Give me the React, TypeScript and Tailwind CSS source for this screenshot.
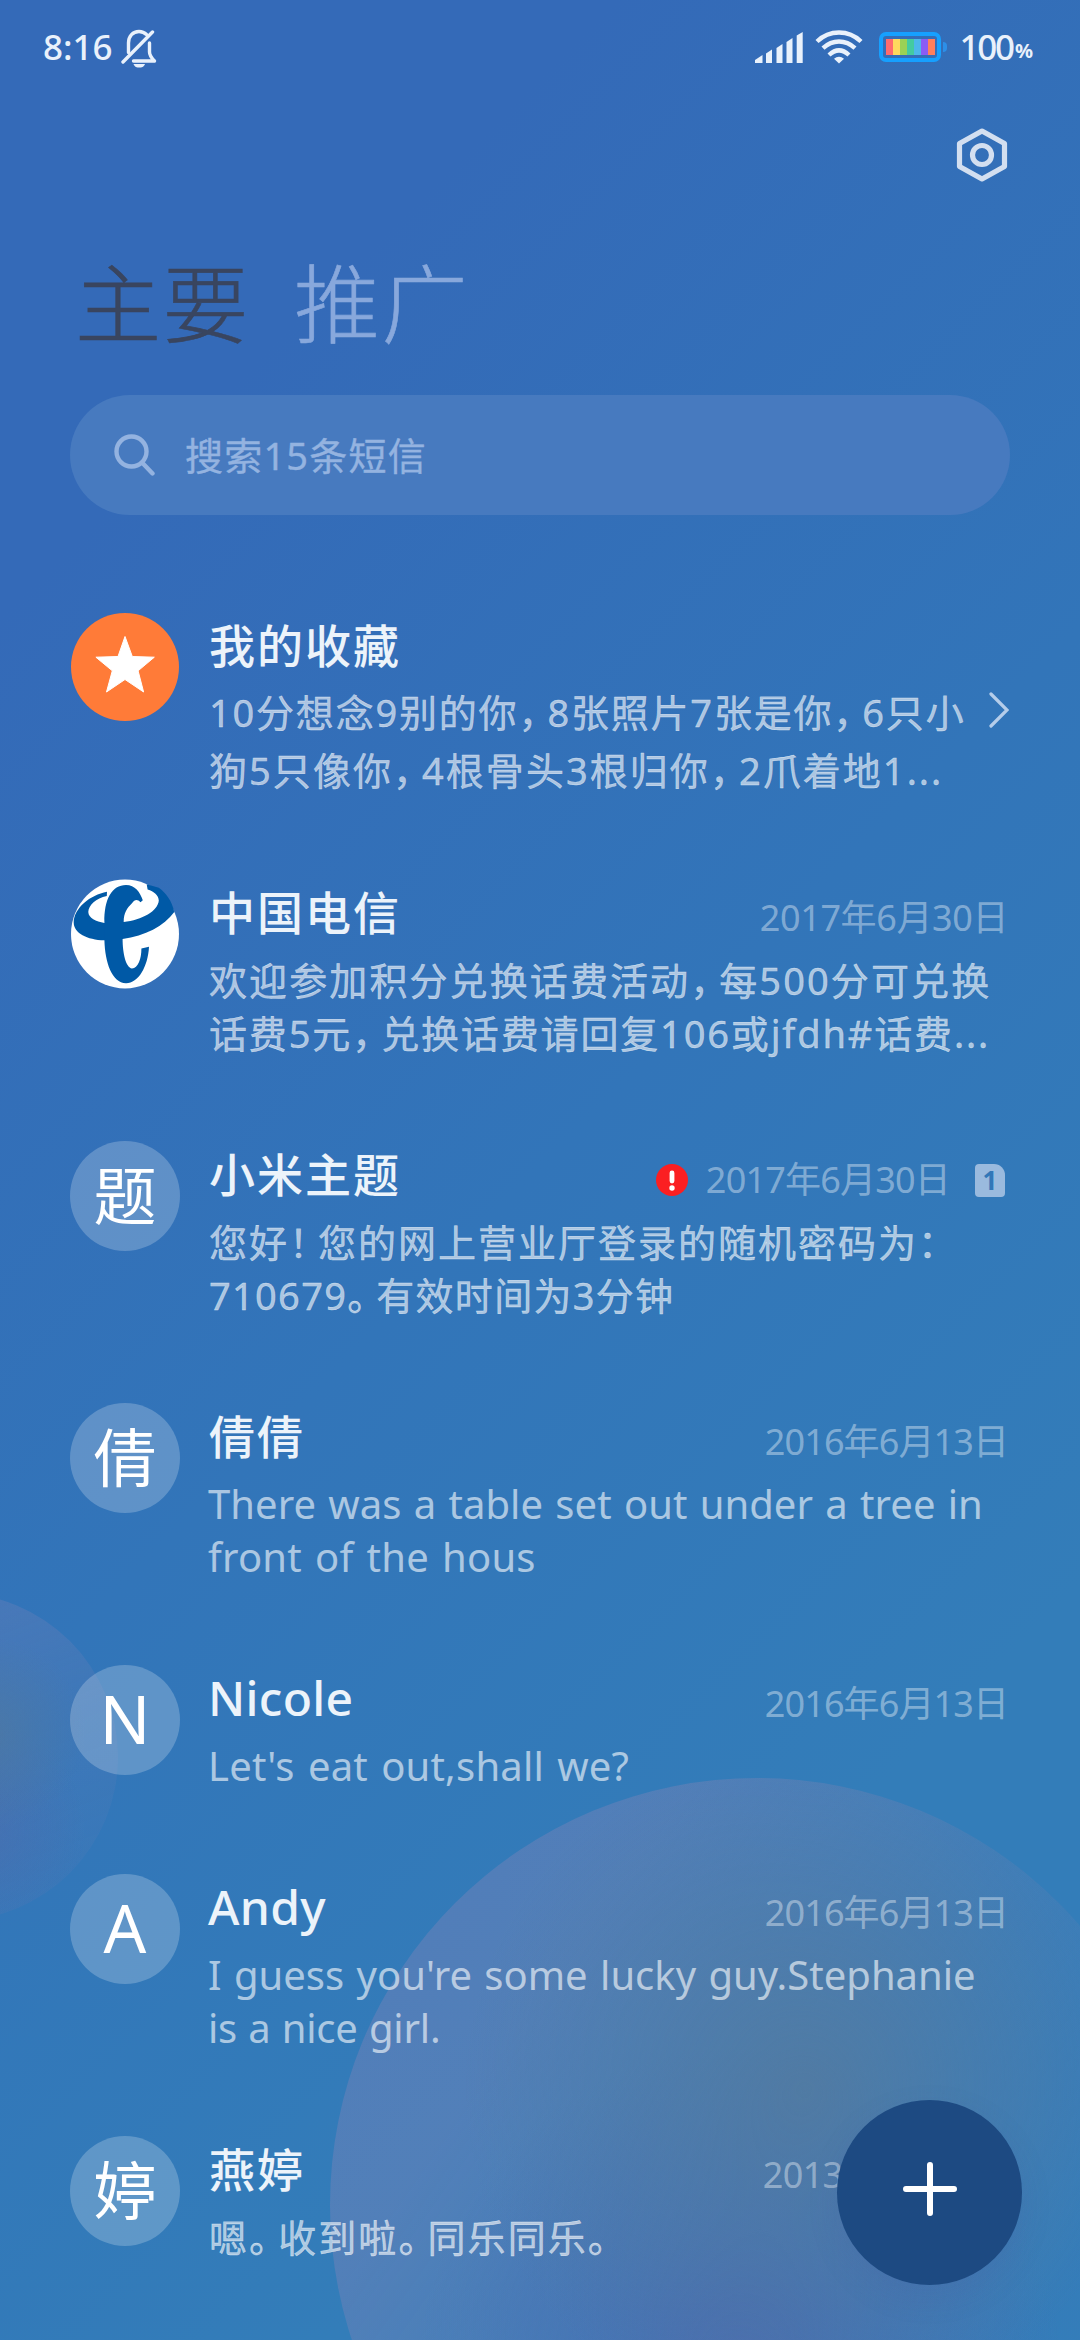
import type { ReactNode } from "react"

type Line = { text: string; spacing: string }

type Message = {
  name: string
  avatar: ReactNode
  avatarClass: string
  date: string
  dateClass: string
  alert?: boolean
  sim?: boolean
  latin?: boolean
  lines: Line[]
}

const messages: Message[] = [
  {
    name: "中国电信",
    avatar: <TelecomLogo />,
    avatarClass: "",
    date: "2017年6月30日",
    dateClass: "tracking-[-0.4px]",
    lines: [
      { text: "欢迎参加积分兑换话费活动，每500分可兑换", spacing: "tracking-[2.1px]" },
      { text: "话费5元，兑换话费请回复106或jfdh#话费...", spacing: "tracking-[1.85px]" },
    ],
  },
  {
    name: "小米主题",
    avatar: "题",
    avatarClass: "bg-white/22 pb-[3px] text-[63px]",
    date: "2017年6月30日",
    dateClass: "tracking-[-0.8px]",
    alert: true,
    sim: true,
    lines: [
      { text: "您好！您的网上营业厅登录的随机密码为：", spacing: "tracking-[2px]" },
      { text: "710679。有效时间为3分钟", spacing: "tracking-[1.3px]" },
    ],
  },
  {
    name: "倩倩",
    avatar: "倩",
    avatarClass: "bg-white/22 pb-[3px] text-[63px]",
    date: "2016年6月13日",
    dateClass: "tracking-[-0.9px]",
    latin: true,
    lines: [
      { text: "There was a table set out under a tree in", spacing: "tracking-[0.05px] [word-spacing:1.8px]" },
      { text: "front of the hous", spacing: "tracking-[0.2px] [word-spacing:2.6px]" },
    ],
  },
  {
    name: "Nicole",
    avatar: "N",
    avatarClass: "bg-white/22 pb-[3px] text-[67px]",
    date: "2016年6月13日",
    dateClass: "tracking-[-0.9px]",
    latin: true,
    lines: [{ text: "Let's eat out,shall we?", spacing: "tracking-[0.2px] [word-spacing:2.6px]" }],
  },
  {
    name: "Andy",
    avatar: "A",
    avatarClass: "bg-white/22 pb-[3px] text-[67px]",
    date: "2016年6月13日",
    dateClass: "tracking-[-0.9px]",
    latin: true,
    lines: [
      { text: "I guess you're some lucky guy.Stephanie", spacing: "[word-spacing:2px]" },
      { text: "is a nice girl.", spacing: "tracking-[-0.2px] [word-spacing:1px]" },
    ],
  },
  {
    name: "燕婷",
    avatar: "婷",
    avatarClass: "bg-white/22 pb-[3px] text-[63px]",
    date: "2013年9月20日",
    dateClass: "tracking-[-0.7px]",
    lines: [{ text: "嗯。收到啦。同乐同乐。", spacing: "tracking-[2.1px]" }],
  },
]

// full-width punctuation is set tighter than the surrounding glyphs
function Tight({ text }: { text: string }) {
  return (
    <>
      {text.split(/([，。！：])/).map((part, i) =>
        i % 2 === 1 ? (
          <span key={i} className="tracking-[-9px]">
            {part}
          </span>
        ) : (
          part
        )
      )}
    </>
  )
}

function TelecomLogo() {
  return (
    <svg viewBox="0 0 110 110" className="size-[110px]">
      <ellipse cx="55" cy="55" rx="54" ry="54.5" fill="#fff" />
      <g fill="#0059a6">
        <path d="M37 12.7C20 16 4 29 3.7 43.5C3.8 54 17 61 34.4 61.3L52.6 60C75 57 94 47 104.3 33C102 22 96 14 88.8 8.8L76.7 5.3L77.6 10.5C84 12.5 88.5 16 88.8 21.5C88 32 72 41 53.7 43L34.4 44C26 42.5 18.5 39 18.3 33C18.5 26 26 19.5 36.8 17Z" />
        <path d="M34.4 61L34.4 43.7C34 20 42 6 56 6C65 6 70 13 72.8 21.3L70.5 23.2C67.5 20 64.5 20.5 62.2 24C57 29 53.7 34 53.7 42.5L52.6 59.5C52.6 75 56 88.5 62 89.5C68 89 71.5 80 71.4 69.5L79 67.8C78 88 68 104.5 56 104.3C42 103.5 35 84 34.4 61Z" />
      </g>
    </svg>
  )
}

function StarAvatar() {
  return (
    <svg viewBox="0 0 110 110" className="size-[110px]">
      <circle cx="55" cy="55" r="54" fill="#ff7b38" />
      <path
        d="M55 24.5L62.3 44.5L84.3 45.2L68.1 58.8L73.6 80L55 67.5L36.5 80L42.3 58.8L25.9 45.2L48 44.5Z"
        fill="#fff"
        stroke="#fff"
        strokeWidth="1"
        strokeLinejoin="round"
      />
    </svg>
  )
}

function StatusBar() {
  return (
    <div className="flex h-[93px] items-center pr-[47px] pl-[43px] text-[35px] leading-none font-medium text-[#e9f1fb]">
      <span>8:16</span>
      <svg viewBox="0 0 36 40" className="mt-0.5 ml-2 h-10 w-9" fill="none" stroke="currentColor">
        <g strokeWidth="3.4" strokeLinecap="round" strokeLinejoin="round">
          <path d="M2 34L31.5 4" />
          <path d="M7.5 24.5V15C7.5 8 12 3.5 18 3.5C21 3.5 23.5 4.5 25.5 6.5" />
          <path d="M28.5 15V24C28.5 27 30.5 30 33.5 33H12.5" />
        </g>
        <path d="M12.5 36H24C23 39 20.5 39.5 18.2 39.5C16 39.5 13.5 39 12.5 36Z" fill="currentColor" stroke="none" />
      </svg>
      <div className="ml-auto flex items-center">
        <svg viewBox="0 0 48 31" className="mt-0.5 h-[31px] w-12" fill="currentColor">
          <path d="M0 31V28L7.5 23V31Z" />
          <path d="M11 31V21.5L17 17.5V31Z" />
          <path d="M21.5 31V16L27.5 12V31Z" />
          <path d="M31.5 31V10L37.5 6V31Z" />
          <path d="M41.7 31V3.5L47.7 0V31Z" />
        </svg>
        <svg viewBox="0 0 48 34" className="ml-3 h-[34px] w-12" fill="none" stroke="currentColor" strokeWidth="4.4">
          <path d="M2 11.5C14.5 -0.5 33.5 -0.5 46 11.5" />
          <path d="M8 18.2C17.5 9.3 30.5 9.3 40 18.2" />
          <path d="M14 25C20.5 19 27.5 19 34 25" />
          <path d="M24 33.5L19 28.8C22 26 26 26 29 28.8Z" fill="currentColor" stroke="none" />
        </svg>
        <div className="ml-4 flex h-[30px] w-[62px] rounded-[7px] border-[4px] border-[#16a0ff] p-[3px]">
          <div className="flex-1 bg-[#ff6b6e]" />
          <div className="flex-1 bg-[#ffd95e]" />
          <div className="flex-1 bg-[#9ad155]" />
          <div className="flex-1 bg-[#43cba0]" />
          <div className="flex-1 bg-[#4db8ea]" />
          <div className="flex-1 bg-[#8a5cf5]" />
          <div className="flex-1 bg-[#ff7f5c]" />
        </div>
        <div className="ml-0.5 h-2.5 w-1 rounded-r-sm bg-[#2c8fe8]" />
        <span className="ml-3 tracking-[-2.2px]">100</span>
        <span className="mt-2 ml-0.5 text-[20px] font-bold">%</span>
      </div>
    </div>
  )
}

function Backdrop() {
  return (
    <>
      <div className="absolute top-[1593px] left-[-210px] size-[328px] rounded-full bg-[radial-gradient(circle_95px_at_200px_140px,rgba(80,120,160,0.7),transparent),radial-gradient(circle_110px_at_185px_235px,rgba(84,104,168,0.45),transparent),linear-gradient(160deg,rgba(160,140,185,0.26),rgba(140,135,185,0.13)_50%,rgba(120,135,190,0.08))]" />
      <div className="absolute top-[1778px] left-[330px] size-[854px] rounded-full bg-[radial-gradient(circle_340px_at_475px_310px,rgba(84,122,158,0.8),rgba(84,122,158,0.4)_50%,transparent),radial-gradient(circle_320px_at_410px_590px,rgba(76,106,174,0.9),rgba(74,108,176,0.5)_45%,transparent),linear-gradient(125deg,rgba(145,135,185,0.33)_25%,rgba(110,132,187,0.18)_55%,rgba(70,125,190,0.1)_75%)]" />
    </>
  )
}

function Avatar({ className, children }: { className: string; children: ReactNode }) {
  return (
    <div className={"flex size-[110px] shrink-0 items-center justify-center rounded-full leading-none text-white " + className}>
      {children}
    </div>
  )
}

function Name({ children }: { children: string }) {
  const latin = /^[A-Za-z]/.test(children)
  return (
    <h2
      className={
        "-mt-px mb-px h-[68px] leading-[68px] font-medium whitespace-nowrap text-[#ecf3fa] " +
        (latin ? "-ml-px text-[48px] tracking-[0.3px]" : "text-[46px] tracking-[2px]")
      }
    >
      {children}
    </h2>
  )
}

function MessageRow({ message }: { message: Message }) {
  return (
    <li className="flex gap-[29px]">
      <Avatar className={message.avatarClass}>{message.avatar}</Avatar>
      <div className="min-w-0 flex-1">
        <div className="flex">
          <Name>{message.name}</Name>
          <div className="mt-3 ml-auto flex h-[54px] items-center">
            {message.alert && (
              <svg viewBox="0 0 32 32" className="mr-[18px] size-8">
                <circle cx="16" cy="16" r="16" fill="#fb1f22" />
                <path d="M16 9V17" stroke="#fff" strokeWidth="4.8" strokeLinecap="round" />
                <circle cx="16" cy="24" r="2.7" fill="#fff" />
              </svg>
            )}
            <span className={"text-[36px] whitespace-nowrap text-white/40 " + message.dateClass}>{message.date}</span>
            {message.sim ? (
              <div className="mr-[5px] ml-[25px] flex h-[33px] w-[30px] items-center justify-center rounded-[4px] rounded-tr-[11px] bg-[#9abade] text-[26px] leading-none font-bold text-[#3277b8]">
                1
              </div>
            ) : (
              <div className="w-0.5" />
            )}
          </div>
        </div>
        <div
          className={
            message.latin ? "mt-1.5 mb-0.5 -ml-px text-[40px]" : "mt-[7px] mb-px text-[38px] [-webkit-text-stroke:0.4px]"
          }
        >
          {message.lines.map(line => (
            <p key={line.text} className={"h-[53px] leading-[53px] whitespace-nowrap text-white/60 " + line.spacing}>
              <Tight text={line.text} />
            </p>
          ))}
        </div>
      </div>
    </li>
  )
}

export default function App() {
  return (
    <div className="relative h-[2340px] w-[1080px] overflow-hidden bg-[linear-gradient(135deg,#346ab8_18%,#3275b9_50%,#337db9_78%)] text-white [font-family:'Noto_Sans','Noto_Sans_CJK_SC',sans-serif]">
      <Backdrop />

      <div className="relative">
        <StatusBar />

        <div className="flex h-[121px] justify-end pr-[72px]">
          <svg viewBox="0 0 52 56" className="mt-[34px] h-14 w-[52px]" fill="none" stroke="#d3dff0" strokeWidth="5.2" strokeLinejoin="round">
            <path d="M26 4L48.5 16.5V39.5L26 52L3.5 39.5V16.5Z" />
            <circle cx="26" cy="28" r="9.5" />
          </svg>
        </div>

        <nav className="flex h-[181px] pl-[75px] text-[86px] leading-[179px] font-light tracking-[1.5px] [-webkit-text-stroke:0.6px]">
          <span className="text-[#39455f]">主要</span>
          <span className="ml-[44px] text-[#88a8dc]">推广</span>
        </nav>

        <div className="mx-[70px] flex h-[120px] items-center rounded-full bg-[#477abf] pl-[44px] text-[#94b3e0]">
          <svg viewBox="0 0 42 42" className="size-[42px]" fill="none" stroke="currentColor" strokeWidth="4.4" strokeLinecap="round">
            <circle cx="17.5" cy="17.5" r="15" />
            <path d="M28.5 29L38.5 39.5" />
          </svg>
          <span className="ml-[29px] text-[38px] tracking-[1.2px] [-webkit-text-stroke:0.4px]">搜索15条短信</span>
        </div>

        <main className="px-[70px] pt-[97px]">
          <section className="flex h-[267px] gap-[29px]">
            <Avatar className="">
              <StarAvatar />
            </Avatar>
            <div className="min-w-0 flex-1">
              <Name>我的收藏</Name>
              <div className="mt-1 text-[38px] leading-[58px] whitespace-nowrap text-white/60 [-webkit-text-stroke:0.4px]">
                <p className="tracking-[1.8px]">
                  <Tight text="10分想念9别的你，8张照片7张是你，6只小" />
                </p>
                <p className="tracking-[2.05px]">
                  <Tight text="狗5只像你，4根骨头3根归你，2爪着地1..." />
                </p>
              </div>
            </div>
            <svg viewBox="0 0 20 36" className="mt-20 mr-px h-9 w-5 shrink-0" fill="none" stroke="#b5cdea" strokeWidth="3.2" strokeLinecap="round">
              <path d="M2 2L18 18L2 34" />
            </svg>
          </section>

          <ul className="flex flex-col gap-20">
            {messages.map(message => (
              <MessageRow key={message.name} message={message} />
            ))}
          </ul>
        </main>
      </div>

      {/* Compose */}
      <button className="absolute top-[2100px] left-[837px] flex size-[185px] items-center justify-center rounded-full bg-[#1d4a82] shadow-[0_12px_30px_rgba(70,80,160,0.15)]">
        <svg viewBox="0 0 54 54" className="mb-[7px] size-[54px]" stroke="#fff" strokeWidth="6" strokeLinecap="round">
          <path d="M27 3V51M3 27H51" />
        </svg>
      </button>
    </div>
  )
}
